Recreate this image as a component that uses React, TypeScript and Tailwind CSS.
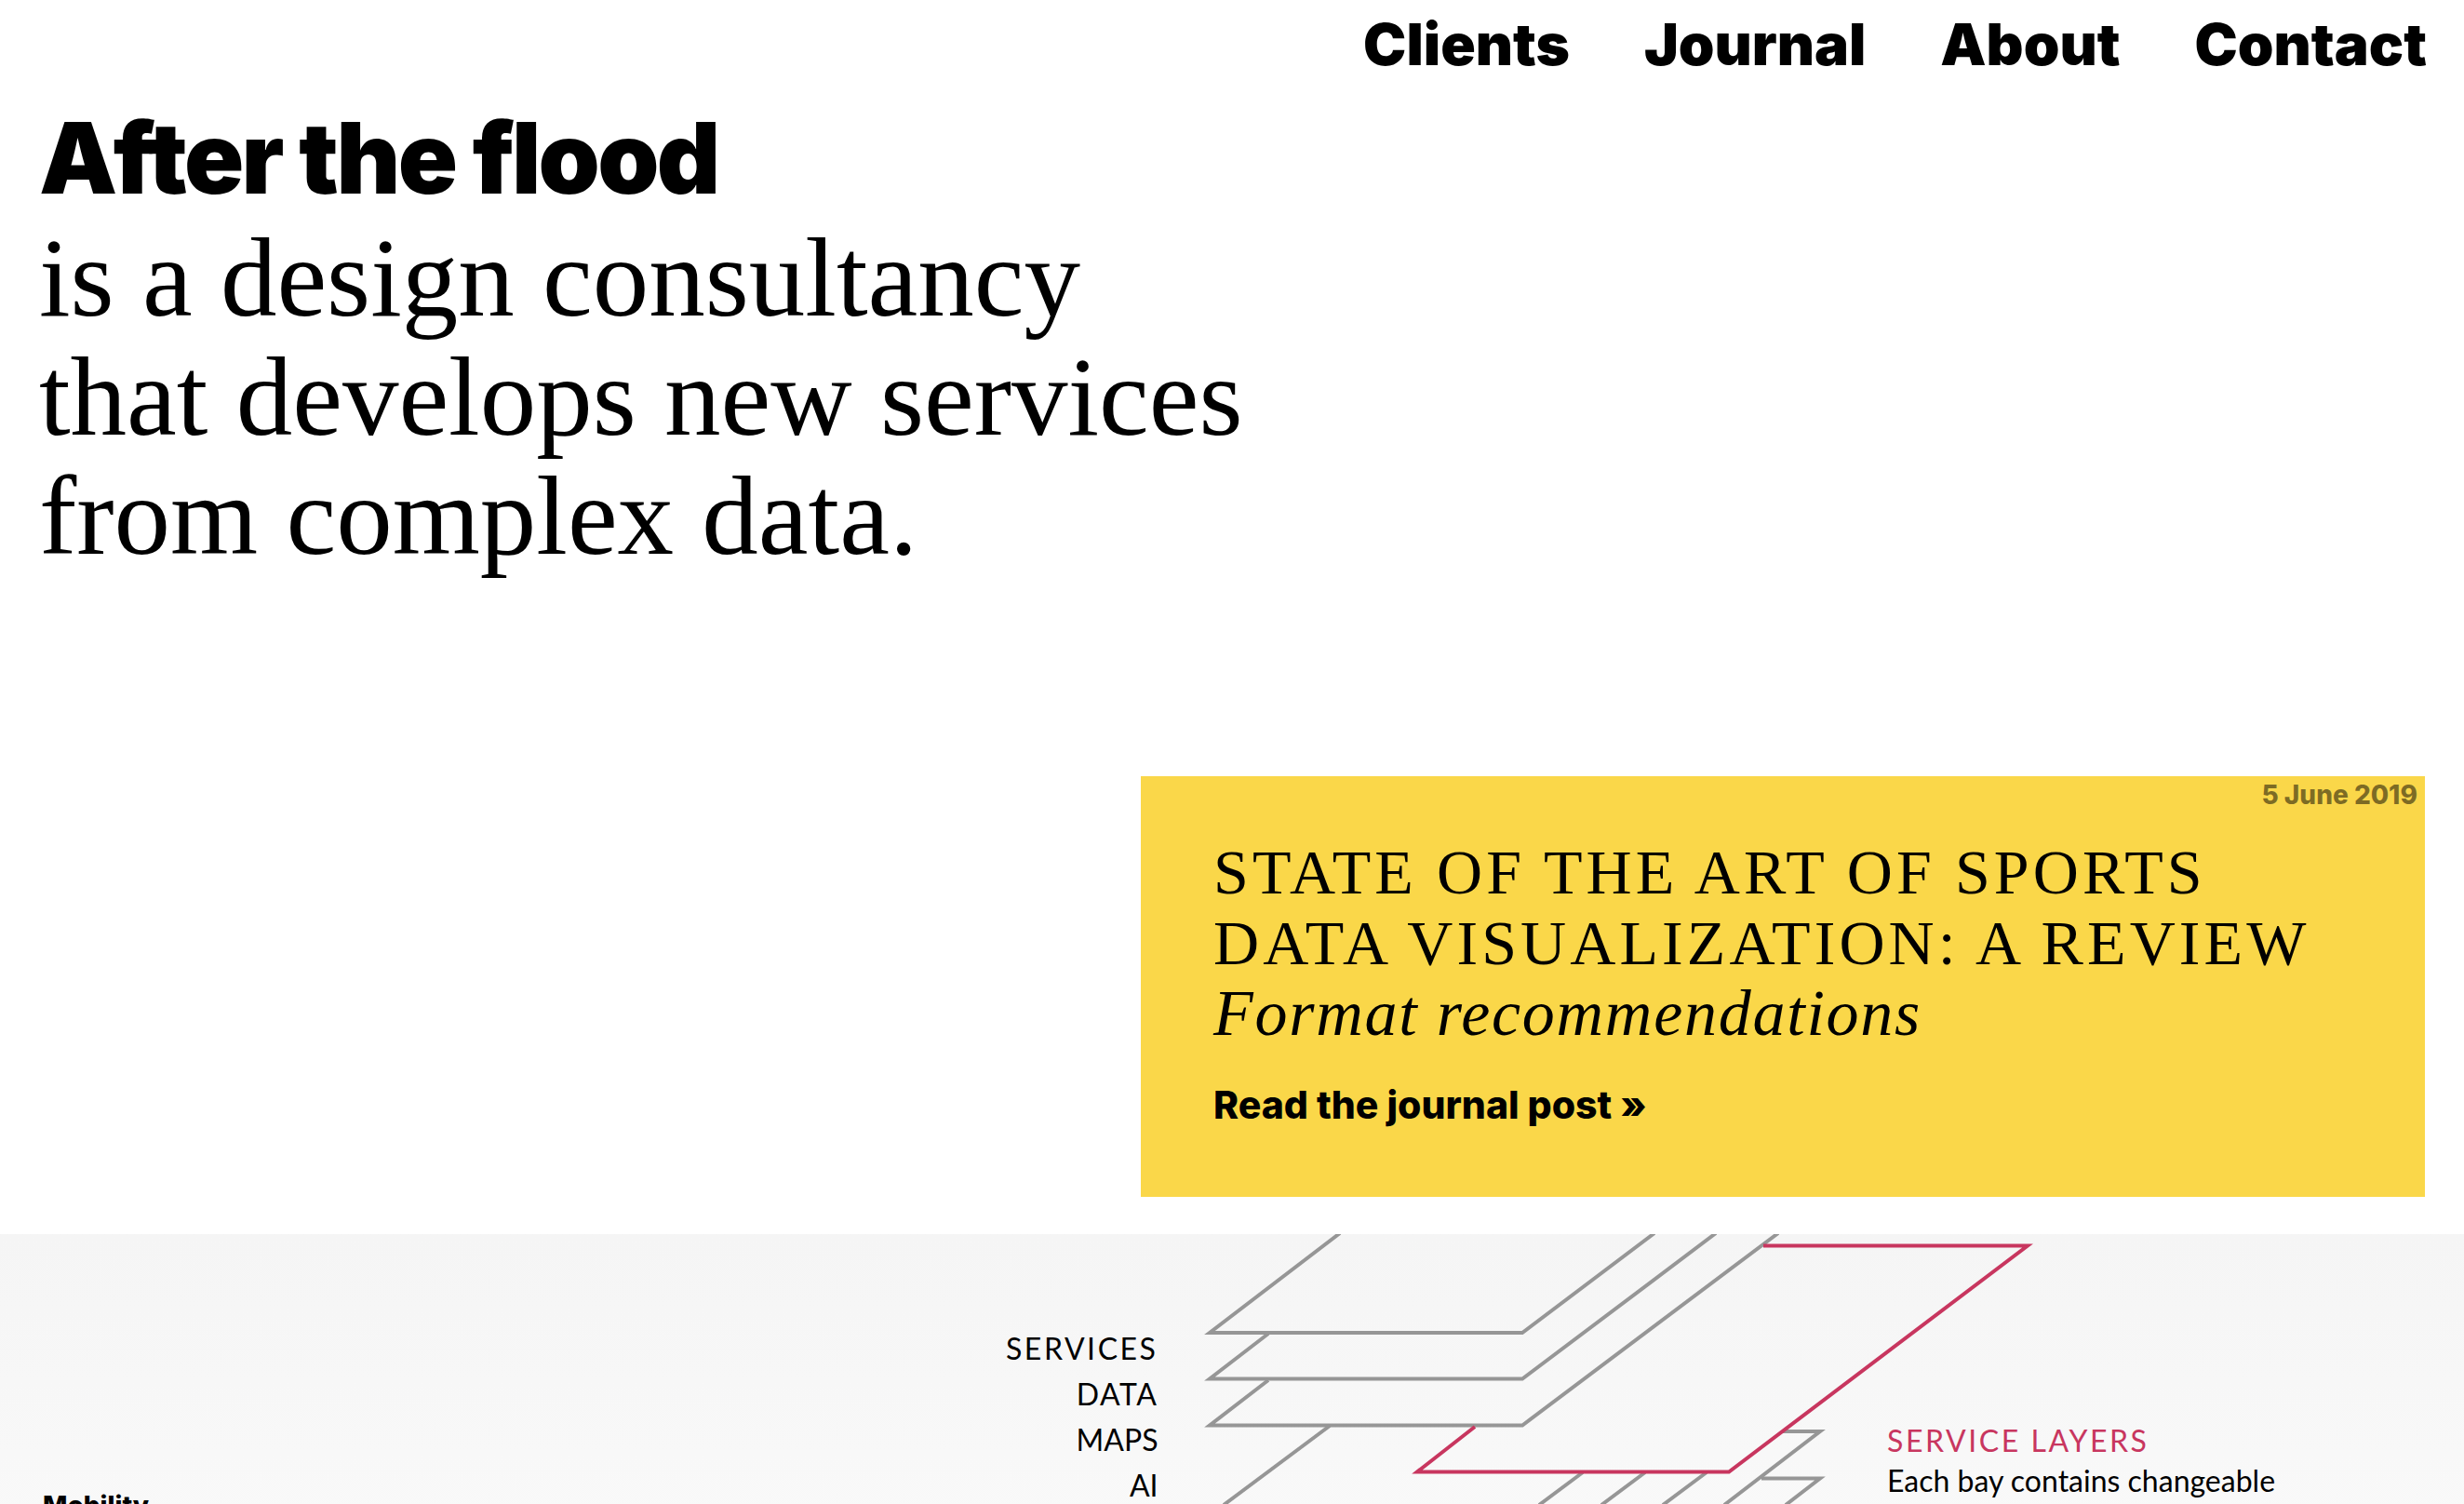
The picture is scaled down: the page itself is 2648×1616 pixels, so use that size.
const navLinks = ["Clients", "Journal", "About", "Contact"];

const serif = "font-['Liberation_Serif',serif]";
const grotesk = "font-[Inter,sans-serif]";

function Nav() {
  return (
    <header>
      <nav aria-label="Main" className={`${grotesk} flex flex-wrap justify-end gap-x-20 pt-4 pr-10 text-[62px] leading-[64px] font-black`}>
        {navLinks.map((label) => (
          <a key={label} href={`#${label.toLowerCase()}`}>
            {label}
          </a>
        ))}
      </nav>
    </header>
  );
}

function Intro() {
  return (
    <h1 className={`${serif} px-[42px] pt-[26px] text-[121px] leading-[128px] font-normal`}>
      <span className={`${grotesk} block text-[106px] font-black tracking-tight`}>After the flood</span>
      <span className="block">is a design consultancy</span>
      <span className="block">that develops new services</span>
      <span className="block">from complex data.</span>
    </h1>
  );
}

function JournalCard() {
  return (
    <article className="mt-[216px] mr-[42px] mb-10 ml-auto w-[1380px] max-w-full bg-[#fad749] pb-[75px]">
      <time dateTime="2019-06-05" className={`${grotesk} block pr-2 text-right text-[28px] leading-10 font-extrabold text-black/50`}>
        5 June 2019
      </time>
      <div className="pt-[25px] pl-[78px]">
        <h2 className={`${serif} text-[68px] leading-[76px]`}>
          <span className="block tracking-[0.06em]">STATE OF THE ART OF SPORTS</span>
          <span className="block tracking-[0.06em]">DATA VISUALIZATION: A REVIEW</span>
          <em className="block text-[70px] tracking-wide">Format recommendations</em>
        </h2>
        <a href="#journal-post" className={`${grotesk} mt-9 block text-[41px] leading-[48px] font-extrabold`}>
          Read the journal post »
        </a>
      </div>
    </article>
  );
}

function LayerDiagram() {
  return (
    <svg aria-hidden="true" viewBox="0 0 2648 290" fill="none" strokeWidth="4" strokeMiterlimit="10" className="absolute top-0 left-0 w-full">
      <g stroke="#969696">
        <path d="M1440 -1 1300 106H1636L1778 -1" />
        <path d="M1363 107 1300 155.5H1636L1844 -1" />
        <path d="M1363 157 1300 205.5H1636L1911 -1" />
        <path d="M1429 206 1315 291" />
        <path d="M1701 256 1654 291M1768 256 1721 291M1834 256 1787 291" />
        <path d="M1916 212H1956L1853 291" />
        <path d="M1893 262.5H1956L1919 291" />
      </g>
      <path stroke="#c8365f" d="M1585 207 1523 255.5H1858L2179 12.5H1895" />
    </svg>
  );
}

function MobilitySection() {
  return (
    <section className="relative flex grow items-start bg-linear-to-b from-[#f5f5f5] to-[#f9f9f9]">
      <LayerDiagram />
      <div className="relative flex w-[47%] items-start justify-between pl-[46px]">
        <h3 className={`${grotesk} pt-[272px] text-[28px] leading-10 font-extrabold`}>Mobility</h3>
        <ul className="pt-[98px] text-right font-[Lato,sans-serif] text-[32px] leading-[49px]">
          <li className="tracking-[0.08em]">SERVICES</li>
          <li className="tracking-wider">DATA</li>
          <li>MAPS</li>
          <li>AI</li>
        </ul>
      </div>
      <div className="relative ml-auto w-[620px] pt-[200px] font-[Lato,sans-serif] text-[32px] leading-[43px]">
        <h4 className="tracking-[0.08em] text-[#c8365f]">SERVICE LAYERS</h4>
        <p>Each bay contains changeable</p>
      </div>
    </section>
  );
}

export default function App() {
  return (
    <main className="flex h-screen flex-col overflow-hidden bg-white text-black">
      <Nav />
      <Intro />
      <JournalCard />
      <MobilitySection />
    </main>
  );
}
